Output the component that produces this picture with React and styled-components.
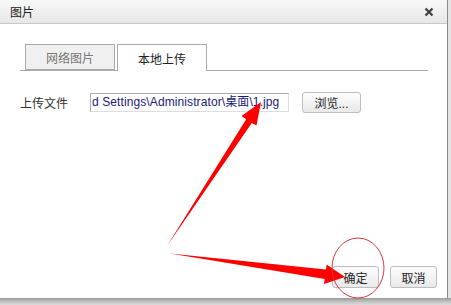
import React from "react";
import styled, { createGlobalStyle } from "styled-components";

const GlobalStyle = createGlobalStyle`
  html, body {
    margin: 0;
    padding: 0;
    background: #e9e9e9;
  }
  body {
    font-family: "Liberation Sans", "Noto Sans CJK SC", sans-serif;
    font-size: 12px;
    color: #333;
  }
`;

const Screen = styled.div`
  position: relative;
  width: 451px;
  height: 305px;
  overflow: hidden;
  display: flex;
  flex-direction: column;
  background: #e4e4e4;
`;

const Dialog = styled.div`
  width: 447px;
  height: 298px;
  display: flex;
  flex-direction: column;
  background: #fff;
  border-right: 1px solid #8c8c8c;
`;

const Shadow = styled.div`
  height: 7px;
  background: linear-gradient(#9a9a9a, #c6c6c6 60%, #dcdcdc);
`;

const TitleBar = styled.div`
  height: 23px;
  display: flex;
  align-items: center;
  justify-content: space-between;
  padding: 0 10px 0 10px;
  background: linear-gradient(#f8f8f8, #e7e7e7);
  border-bottom: 1px solid #c9c9c9;
  color: #222;
  font-size: 12px;
`;

const Close = styled.span`
  display: flex;
  width: 10px;
  height: 10px;
  margin-right: 3px;
`;

const Body = styled.div`
  flex: 1;
  padding: 20px 19px 0 20px;
  display: flex;
  flex-direction: column;
`;

const TabBar = styled.div`
  display: flex;
  gap: 2px;
  padding-left: 5px;
  border-bottom: 1px solid #aaa;
  height: 26px;
`;

const Tab = styled.div`
  width: 90px;
  height: ${(p) => (p.$active ? "27px" : "26px")};
  box-sizing: border-box;
  display: flex;
  align-items: center;
  justify-content: center;
  border: 1px solid #aaa;
  border-bottom: ${(p) => (p.$active ? "none" : "1px solid #aaa")};
  background: ${(p) => (p.$active ? "#fff" : "#f0f0f0")};
  color: ${(p) => (p.$active ? "#222" : "#777")};
  font-size: 12px;
`;

const Row = styled.div`
  display: flex;
  align-items: center;
  margin-top: 21px;
  height: 21px;
`;

const Label = styled.div`
  width: 70px;
  color: #333;
`;

const FileField = styled.div`
  width: 199px;
  height: 19px;
  box-sizing: border-box;
  border: 1px solid #a9a9a9;
  border-right-color: #ddd;
  border-bottom-color: #ddd;
  overflow: hidden;
  white-space: nowrap;
  padding-left: 1px;
  line-height: 17px;
  color: #1b1a78;
  font-size: 12px;
  letter-spacing: 0.1px;
`;

const Button = styled.button`
  width: ${(p) => p.$w || 47}px;
  height: ${(p) => p.$h || 22}px;
  margin-left: ${(p) => p.$ml || 0}px;
  padding: 0;
  border: 1px solid #bdbdbd;
  border-radius: 3px;
  background: linear-gradient(#fdfdfd, #e9e9e9);
  color: #222;
  font-family: inherit;
  font-size: 12px;
`;

const Footer = styled.div`
  display: flex;
  justify-content: flex-end;
  gap: 11px;
  padding: 0 10px 10px 0;
`;

const Overlay = styled.svg`
  position: absolute;
  left: 0;
  top: 0;
  pointer-events: none;
`;

export default function App() {
  return (
    <>
      <GlobalStyle />
      <Screen>
        <Dialog>
          <TitleBar>
            <span>图片</span>
            <Close>
              <svg width="10" height="10" viewBox="0 0 10 10">
                <path d="M1.5 1.5 L8.5 8.5 M8.5 1.5 L1.5 8.5" stroke="#444" strokeWidth="2.4" />
              </svg>
            </Close>
          </TitleBar>
          <Body>
            <TabBar>
              <Tab>网络图片</Tab>
              <Tab $active>本地上传</Tab>
            </TabBar>
            <Row>
              <Label>上传文件</Label>
              <FileField>d Settings\Administrator\桌面\1.jpg</FileField>
              <Button $w={59} $h={21} $ml={13}>浏览...</Button>
            </Row>
          </Body>
          <Footer>
            <Button>确定</Button>
            <Button>取消</Button>
          </Footer>
        </Dialog>
        <Shadow />
        <Overlay width="451" height="305" viewBox="0 0 451 305">
          <polygon
            points="167,246 246.2,119.2 241.5,116 261,102 256.5,125.5 251.8,123"
            fill="#f00"
          />
          <polygon
            points="170,253.5 326,269.6 326.6,264.6 345,277 324,284 324.7,279"
            fill="#f00"
          />
          <ellipse cx="358" cy="268" rx="26" ry="30" fill="none" stroke="#d8383c" strokeWidth="1" />
        </Overlay>
      </Screen>
    </>
  );
}
